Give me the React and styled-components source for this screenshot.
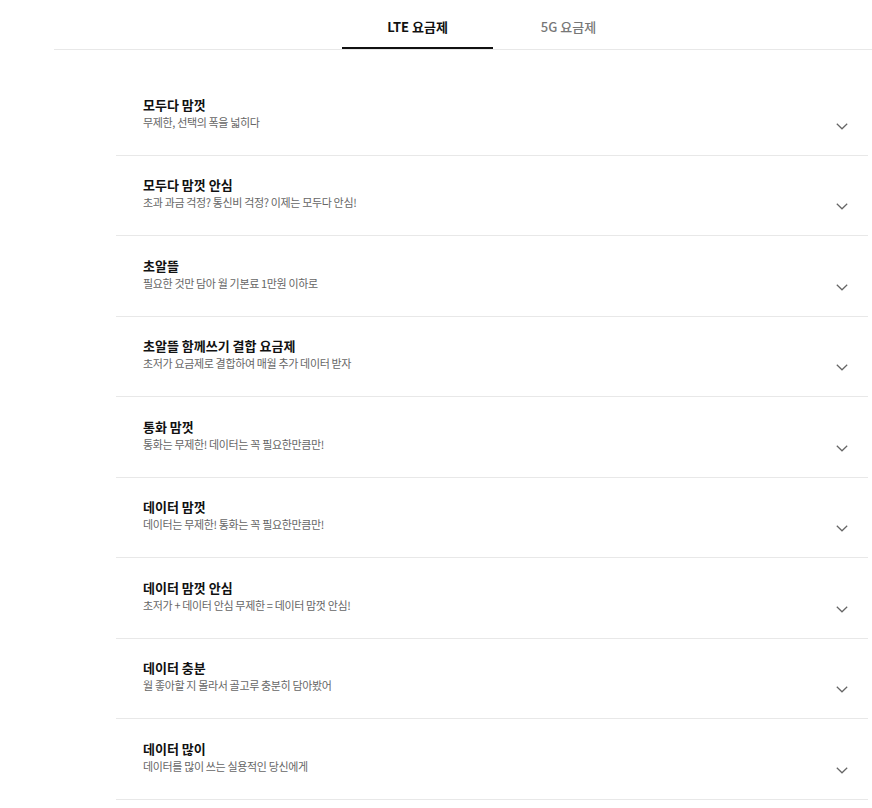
import styled, { createGlobalStyle } from "styled-components"

const GlobalStyle = createGlobalStyle`
    body {
        margin: 0;
        background: #fff;
        font-family: "Noto Sans CJK KR", "Noto Sans", sans-serif;
        color: #111;
    }
`;

const plans = [
    { id: 1, title: "모두다 맘껏", desc: "무제한, 선택의 폭을 넓히다" },
    { id: 2, title: "모두다 맘껏 안심", desc: "초과 과금 걱정? 통신비 걱정? 이제는 모두다 안심!" },
    { id: 3, title: "초알뜰", desc: "필요한 것만 담아 월 기본료 1만원 이하로" },
    { id: 4, title: "초알뜰 함께쓰기 결합 요금제", desc: "초저가 요금제로 결합하여 매월 추가 데이터 받자" },
    { id: 5, title: "통화 맘껏", desc: "통화는 무제한! 데이터는 꼭 필요한만큼만!" },
    { id: 6, title: "데이터 맘껏", desc: "데이터는 무제한! 통화는 꼭 필요한만큼만!" },
    { id: 7, title: "데이터 맘껏 안심", desc: "초저가 + 데이터 안심 무제한 = 데이터 맘껏 안심!" },
    { id: 8, title: "데이터 충분", desc: "월 좋아할 지 몰라서 골고루 충분히 담아봤어" },
    { id: 9, title: "데이터 많이", desc: "데이터를 많이 쓰는 실용적인 당신에게" },
];

const Chevron = () => (
    <svg width="12" height="7" viewBox="0 0 12 7" fill="none">
        <path d="M0.8 0.8 L6 5.8 L11.2 0.8" stroke="#666" strokeWidth="1.2" />
    </svg>
);

export default function App() {
    return (
        <>
            <GlobalStyle />
            <Page>
                <TabBar>
                    <Tab $active>LTE 요금제</Tab>
                    <Tab>5G 요금제</Tab>
                </TabBar>
                <PlanList>
                    {plans.map((plan) => (
                        <PlanItem key={plan.id}>
                            <PlanText>
                                <PlanTitle>{plan.title}</PlanTitle>
                                <PlanDesc>{plan.desc}</PlanDesc>
                            </PlanText>
                            <ToggleIcon>
                                <Chevron />
                            </ToggleIcon>
                        </PlanItem>
                    ))}
                </PlanList>
            </Page>
        </>
    );
}

const Page = styled.div`
    width: 872px;
    height: 808px;
    overflow: hidden;
`;

const TabBar = styled.div`
    display: flex;
    margin-left: 54px;
    padding-left: 288px;
    border-bottom: 1px solid #e8e8e8;
`;

const Tab = styled.div`
    width: 151px;
    height: 49px;
    box-sizing: border-box;
    display: flex;
    align-items: center;
    justify-content: center;
    padding-top: 6px;
    font-size: 13px;
    font-weight: ${(p) => (p.$active ? 700 : 500)};
    color: ${(p) => (p.$active ? "#111" : "#777")};
    border-bottom: 2px solid ${(p) => (p.$active ? "#111" : "transparent")};
`;

const PlanList = styled.div`
    margin: 25px 0 0 116px;
    width: 752px;
`;

const PlanItem = styled.div`
    display: flex;
    align-items: flex-start;
    justify-content: space-between;
    height: 80.5px;
    box-sizing: border-box;
    border-bottom: 1px solid #e8e8e8;
    padding: 20.5px 20px 0 27px;
`;

const PlanText = styled.div`
    display: flex;
    flex-direction: column;
`;

const PlanTitle = styled.div`
    font-size: 13px;
    font-weight: 700;
    line-height: 18px;
    color: #111;
`;

const PlanDesc = styled.div`
    font-size: 11px;
    line-height: 16px;
    letter-spacing: -0.35px;
    color: #666;
`;

const ToggleIcon = styled.div`
    margin-top: 27px;
    display: flex;
`;
